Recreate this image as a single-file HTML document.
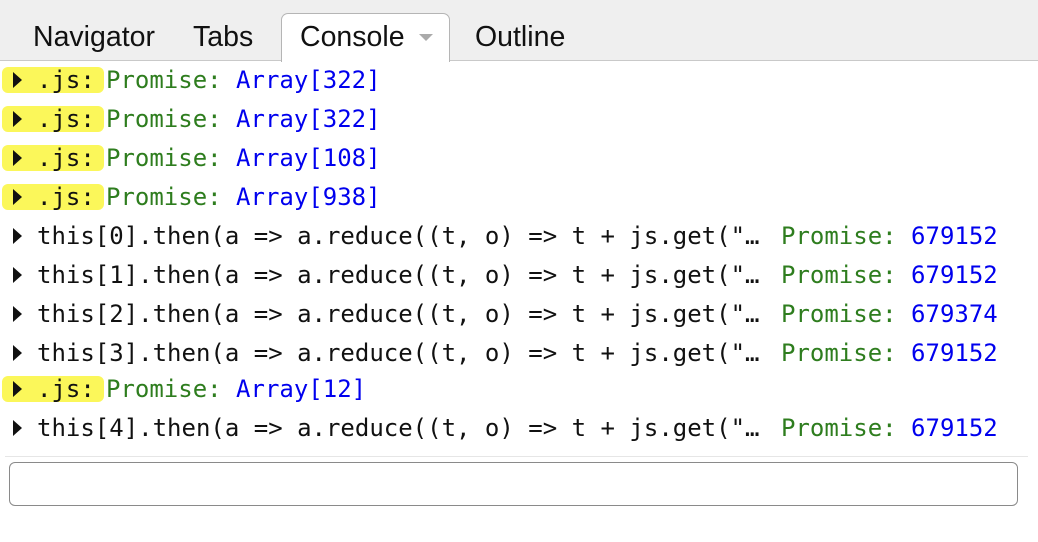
<!DOCTYPE html>
<html><head><style>
body{margin:0;width:1038px;height:542px;background:#fff;position:relative;overflow:hidden;font-family:"DejaVu Sans Mono","Liberation Mono",monospace;}
.bar{position:absolute;left:0;top:0;width:1038px;height:60px;background:#efefef;border-bottom:1px solid #c9c9c9;}
.tab{position:absolute;top:21px;font-family:"Liberation Sans",sans-serif;font-size:28.5px;color:#111;}
.ctab{position:absolute;left:281px;top:13px;width:167px;height:48px;background:#fff;border:1px solid #b5b5b5;border-bottom:none;border-radius:7px 7px 0 0;}
.row{position:absolute;left:0;height:39px;font-size:24px;line-height:26px;white-space:pre;color:#111;}
.hl{position:absolute;left:2px;top:0;width:102px;height:26px;background:#fbf75a;border-radius:6px;}
.tri{position:absolute;left:13px;top:5px;width:0;height:0;border-top:8px solid transparent;border-bottom:8px solid transparent;border-left:9px solid #111;}
.t{position:absolute;top:0;}
.g{color:#2e7d1e}.b{color:#0000ee}
</style></head><body>
<div class="bar"></div>
<div class="ctab"></div>
<div class="tab" style="left:33px">Navigator</div>
<div class="tab" style="left:193px">Tabs</div>
<div class="tab" style="left:300px">Console</div>
<div style="position:absolute;left:419px;top:34px;border-left:7px solid transparent;border-right:7px solid transparent;border-top:7px solid #aaa;"></div>
<div class="tab" style="left:475px">Outline</div>

<div class="row" style="top:67px"><div class="hl"></div><div class="tri"></div><span class="t" style="left:37px">.js:</span><span class="t g" style="left:106px">Promise: <span class="b">Array[322]</span></span></div>
<div class="row" style="top:106px"><div class="hl"></div><div class="tri"></div><span class="t" style="left:37px">.js:</span><span class="t g" style="left:106px">Promise: <span class="b">Array[322]</span></span></div>
<div class="row" style="top:145px"><div class="hl"></div><div class="tri"></div><span class="t" style="left:37px">.js:</span><span class="t g" style="left:106px">Promise: <span class="b">Array[108]</span></span></div>
<div class="row" style="top:184px"><div class="hl"></div><div class="tri"></div><span class="t" style="left:37px">.js:</span><span class="t g" style="left:106px">Promise: <span class="b">Array[938]</span></span></div>
<div class="row" style="top:223px"><div class="tri"></div><span class="t" style="left:37px">this[0].then(a =&gt; a.reduce((t, o) =&gt; t + js.get("…</span><span class="t g" style="left:781px">Promise: <span class="b">679152</span></span></div>
<div class="row" style="top:262px"><div class="tri"></div><span class="t" style="left:37px">this[1].then(a =&gt; a.reduce((t, o) =&gt; t + js.get("…</span><span class="t g" style="left:781px">Promise: <span class="b">679152</span></span></div>
<div class="row" style="top:301px"><div class="tri"></div><span class="t" style="left:37px">this[2].then(a =&gt; a.reduce((t, o) =&gt; t + js.get("…</span><span class="t g" style="left:781px">Promise: <span class="b">679374</span></span></div>
<div class="row" style="top:340px"><div class="tri"></div><span class="t" style="left:37px">this[3].then(a =&gt; a.reduce((t, o) =&gt; t + js.get("…</span><span class="t g" style="left:781px">Promise: <span class="b">679152</span></span></div>
<div class="row" style="top:376px"><div class="hl"></div><div class="tri"></div><span class="t" style="left:37px">.js:</span><span class="t g" style="left:106px">Promise: <span class="b">Array[12]</span></span></div>
<div class="row" style="top:415px"><div class="tri"></div><span class="t" style="left:37px">this[4].then(a =&gt; a.reduce((t, o) =&gt; t + js.get("…</span><span class="t g" style="left:781px">Promise: <span class="b">679152</span></span></div>

<div style="position:absolute;left:5px;top:456px;width:1023px;height:1px;background:#e6e6e6"></div>
<div style="position:absolute;left:9px;top:462px;width:1007px;height:42px;border:1.5px solid #8a8a8a;border-radius:6px;background:#fff"></div>
</body></html>
